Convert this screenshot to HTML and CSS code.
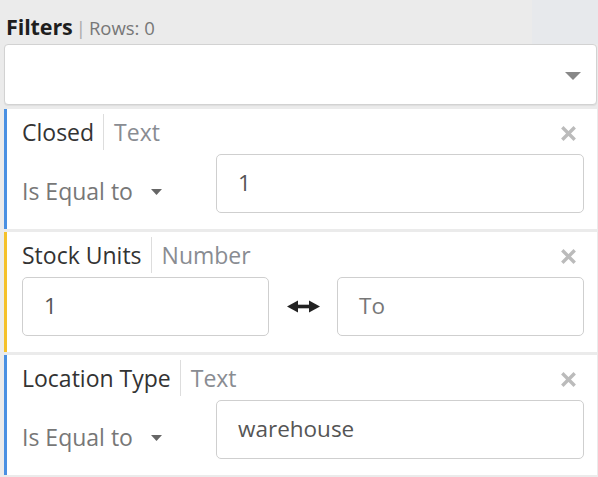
FILE: index.html
```html
<!DOCTYPE html>
<html>
<head>
<meta charset="utf-8">
<link rel="stylesheet" href="styles.css">
</head>
<body>
<div class="top">
  <div class="title"><span class="title-main">Filters</span><span class="rows"><span class="pipe">|</span>Rows: 0</span></div>
  <div class="top-strip"></div>
</div>
<div class="panel">
  <div class="select">
    <svg class="select-caret" width="16" height="8" viewBox="0 0 16 8"><polygon points="0,0 16,0 8,8" fill="#888"/></svg>
  </div>

  <div class="card card-blue">
    <div class="card-head">
      <span class="name">Closed</span><span class="type">Text</span>
      <svg class="close" width="15" height="15" viewBox="0 0 15 15"><path d="M2.5 2.5 L12.5 12.5 M12.5 2.5 L2.5 12.5" stroke="#bbb" stroke-width="3.4" stroke-linecap="square"/></svg>
    </div>
    <div class="row row-op">
      <div class="op">Is Equal to<svg class="op-caret" width="11" height="6" viewBox="0 0 11 6"><polygon points="0,0 11,0 5.5,6" fill="#666"/></svg></div>
      <div class="input">1</div>
    </div>
  </div>

  <div class="card card-yellow">
    <div class="card-head">
      <span class="name">Stock Units</span><span class="type">Number</span>
      <svg class="close" width="15" height="15" viewBox="0 0 15 15"><path d="M2.5 2.5 L12.5 12.5 M12.5 2.5 L2.5 12.5" stroke="#bbb" stroke-width="3.4" stroke-linecap="square"/></svg>
    </div>
    <div class="row row-range">
      <div class="input">1</div>
      <div class="range-arrow">
        <svg width="33" height="13" viewBox="0 0 33 13"><polygon points="0,6.5 11,0.5 11,12.5" fill="#222"/><polygon points="33,6.5 22,0.5 22,12.5" fill="#222"/><rect x="8" y="4.7" width="17" height="3.6" fill="#222"/></svg>
      </div>
      <div class="input placeholder">To</div>
    </div>
  </div>

  <div class="card card-blue">
    <div class="card-head">
      <span class="name">Location Type</span><span class="type">Text</span>
      <svg class="close" width="15" height="15" viewBox="0 0 15 15"><path d="M2.5 2.5 L12.5 12.5 M12.5 2.5 L2.5 12.5" stroke="#bbb" stroke-width="3.4" stroke-linecap="square"/></svg>
    </div>
    <div class="row row-op">
      <div class="op">Is Equal to<svg class="op-caret" width="11" height="6" viewBox="0 0 11 6"><polygon points="0,0 11,0 5.5,6" fill="#666"/></svg></div>
      <div class="input">warehouse</div>
    </div>
  </div>
</div>
</body>
</html>
```

FILE: styles.css
```css
* { box-sizing: border-box; }
html, body {
  margin: 0;
  padding: 0;
  background: #ebebeb;
  font-family: "Open Sans", "DejaVu Sans", sans-serif;
  color: #333;
}
.top {
  display: flex;
  height: 44px;
}
.title {
  flex: 1;
  padding: 13px 0 0 6px;
  line-height: 28px;
  display: flex;
  align-items: baseline;
}
.title-main {
  font-weight: 700;
  font-size: 21.5px;
  color: #1e1e1e;
  letter-spacing: -0.1px;
}
.rows {
  font-size: 18.5px;
  color: #777;
}
.pipe {
  color: #aaa;
  margin: 0 3px 0 3px;
}
.top-strip {
  width: 66px;
  background: #e7e9ec;
}
.panel {
  padding: 0 1px 0 4px;
}
.select {
  height: 61px;
  background: #fff;
  border: 1px solid #d2d2d2;
  border-radius: 4px;
  margin-bottom: 4px;
  display: flex;
  align-items: center;
  justify-content: flex-end;
  padding-right: 15px;
  box-shadow: 0 1px 1px rgba(0,0,0,0.06);
}
.select-caret { margin-top: 2px; }
.card {
  height: 120px;
  background: #fff;
  border-left: 3px solid #4a90e2;
  margin-bottom: 3px;
  padding: 5px 13px 0 15px;
}
.card-blue { border-left-color: #4a90e2; }
.card-yellow { border-left-color: #f5c12a; }
.card-head {
  display: flex;
  align-items: center;
  height: 36px;
  font-size: 23px;
  line-height: 36px;
}
.name { color: #333; }
.type {
  color: #898c92;
  margin-left: 9px;
  padding-left: 10px;
  border-left: 1px solid #ddd;
}
.close {
  margin-left: auto;
  margin-right: 8px;
  margin-top: 3px;
}
.row {
  margin-top: 4px;
  height: 59px;
  display: grid;
}
.row-op {
  grid-template-columns: 194px 1fr;
}
.row-range {
  grid-template-columns: 1fr 68px 1fr;
}
.op {
  font-size: 23px;
  line-height: 30px;
  color: #777;
  padding-top: 14px;
  display: flex;
  align-items: center;
}
.op-caret {
  margin-left: 18px;
  margin-top: 2px;
}
.input {
  border: 1px solid #cfcfcf;
  border-radius: 5px;
  background: #fff;
  font-size: 22.5px;
  color: #555;
  line-height: 55px;
  padding-left: 21px;
}
.placeholder { color: #777; }
.range-arrow {
  display: flex;
  align-items: center;
  justify-content: center;
  padding-left: 1px;
}
```
